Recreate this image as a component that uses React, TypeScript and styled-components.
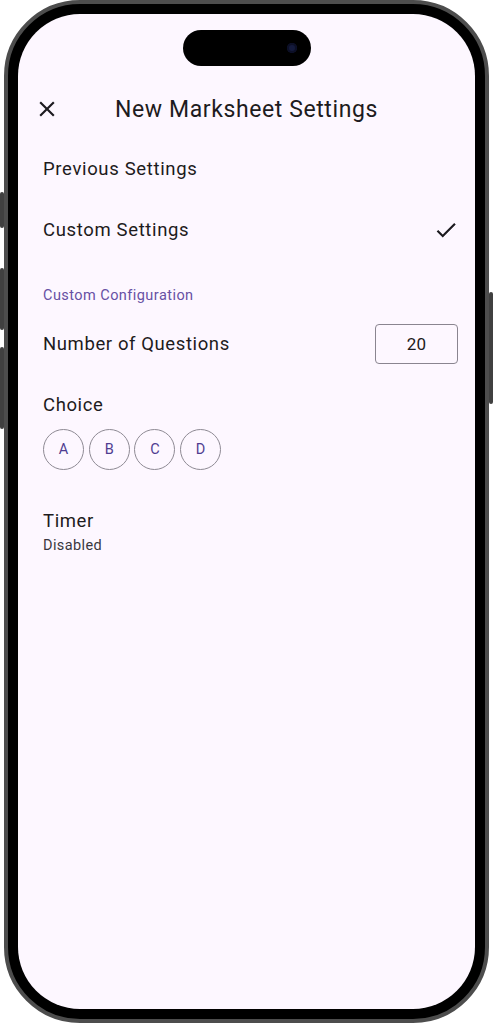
import React from 'react';
import styled, { createGlobalStyle } from 'styled-components';

const GlobalStyle = createGlobalStyle`
    body {
        margin: 0;
        background: #ffffff;
        font-family: Roboto, 'Noto Sans', 'Liberation Sans', sans-serif;
    }
`;

const Stage = styled.div`
    width: 493px;
    height: 1024px;
    padding-left: 4px;
    box-sizing: border-box;
`;

const Phone = styled.div`
    position: relative;
    width: 485px;
    height: 1023px;
    box-sizing: border-box;
    border: 4px solid #4d4d4d;
    border-radius: 76px;
    background: #000;
    padding: 10px;
`;

const SideButton = styled.div<{ $side: 'left' | 'right'; $top: number; $height: number }>`
    position: absolute;
    ${(p) => (p.$side === 'left' ? 'left: -8px;' : 'right: -8px;')}
    top: ${(p) => p.$top}px;
    height: ${(p) => p.$height}px;
    width: 4px;
    background: #404040;
    border-radius: 2px;
`;

const Screen = styled.div`
    position: relative;
    height: 100%;
    border-radius: 62px;
    background: #fdf7ff;
    overflow: hidden;
    padding-top: 66px;
    box-sizing: border-box;
    color: #1d1b20;
`;

const Island = styled.div`
    position: absolute;
    top: 16px;
    left: 50%;
    transform: translateX(-50%);
    width: 128px;
    height: 36px;
    border-radius: 18px;
    background: #000;
`;

const Camera = styled.div`
    position: absolute;
    right: 14px;
    top: 13px;
    width: 10px;
    height: 10px;
    border-radius: 50%;
    background: #141a3c;
    box-shadow: inset 0 0 0 2px #0c0f26;
`;

const Header = styled.div`
    display: grid;
    grid-template-columns: 1fr auto 1fr;
    align-items: center;
    height: 58px;
    padding: 0 16px;
`;

const IconButton = styled.div`
    display: flex;
    align-items: center;
    justify-self: start;
`;

const Title = styled.div`
    font-size: 23px;
    font-weight: 400;
    letter-spacing: 0.6px;
`;

const Body = styled.div`
    padding: 0 16px 0 25px;
`;

const OptionRow = styled.div`
    display: flex;
    align-items: center;
    justify-content: space-between;
    height: 61px;
    font-size: 18.5px;
    letter-spacing: 0.65px;
`;

const SectionLabel = styled.div`
    margin-top: 27px;
    font-size: 14.5px;
    line-height: 18px;
    letter-spacing: 0.45px;
    color: #6750a4;
`;

const FieldRow = styled.div`
    display: flex;
    align-items: center;
    justify-content: space-between;
    margin-top: 19px;
    font-size: 18.5px;
    letter-spacing: 0.6px;
`;

const NumberBox = styled.div`
    width: 83px;
    height: 40px;
    box-sizing: border-box;
    border: 1px solid #8a8590;
    border-radius: 4px;
    margin-right: 1px;
    display: flex;
    align-items: center;
    justify-content: center;
    font-size: 17px;
    letter-spacing: 0.3px;
`;

const FieldLabel = styled.div<{ $gap: number }>`
    margin-top: ${(p) => p.$gap}px;
    font-size: 18.5px;
    line-height: 24px;
    letter-spacing: 0.6px;
`;

const Choices = styled.div`
    display: flex;
    gap: 4.7px;
    margin-top: 12px;
`;

const ChoiceChip = styled.div`
    width: 41px;
    height: 41px;
    box-sizing: border-box;
    border: 1px solid #8e8a94;
    border-radius: 50%;
    display: flex;
    align-items: center;
    justify-content: center;
    font-size: 14.5px;
    color: #4f3d91;
`;

const SubText = styled.div`
    margin-top: 4px;
    font-size: 14.5px;
    line-height: 18px;
    letter-spacing: 0.4px;
    color: #3a3740;
`;

const CloseIcon = () => (
    <svg width="26" height="26" viewBox="0 0 24 24">
        <path
            fill="#1d1b20"
            d="M19 6.41L17.59 5 12 10.59 6.41 5 5 6.41 10.59 12 5 17.59 6.41 19 12 13.41 17.59 19 19 17.59 13.41 12z"
        />
    </svg>
);

const CheckIcon = () => (
    <svg width="26" height="26" viewBox="0 0 24 24">
        <path fill="#1d1b20" d="M9 16.17L4.83 12l-1.42 1.41L9 19 21 7l-1.41-1.41z" />
    </svg>
);

const choices = ['A', 'B', 'C', 'D'];

const App = () => {
    return (
        <Stage>
            <GlobalStyle />
            <Phone>
                <SideButton $side="left" $top={188} $height={36} />
                <SideButton $side="left" $top={264} $height={62} />
                <SideButton $side="left" $top={343} $height={82} />
                <SideButton $side="right" $top={288} $height={112} />
                <Screen>
                    <Island>
                        <Camera />
                    </Island>
                    <Header>
                        <IconButton>
                            <CloseIcon />
                        </IconButton>
                        <Title>New Marksheet Settings</Title>
                        <div />
                    </Header>
                    <Body>
                        <OptionRow>Previous Settings</OptionRow>
                        <OptionRow>
                            Custom Settings
                            <CheckIcon />
                        </OptionRow>
                        <SectionLabel>Custom Configuration</SectionLabel>
                        <FieldRow>
                            Number of Questions
                            <NumberBox>20</NumberBox>
                        </FieldRow>
                        <FieldLabel $gap={29}>Choice</FieldLabel>
                        <Choices>
                            {choices.map((c) => (
                                <ChoiceChip key={c}>{c}</ChoiceChip>
                            ))}
                        </Choices>
                        <FieldLabel $gap={39}>Timer</FieldLabel>
                        <SubText>Disabled</SubText>
                    </Body>
                </Screen>
            </Phone>
        </Stage>
    );
};

export default App;
